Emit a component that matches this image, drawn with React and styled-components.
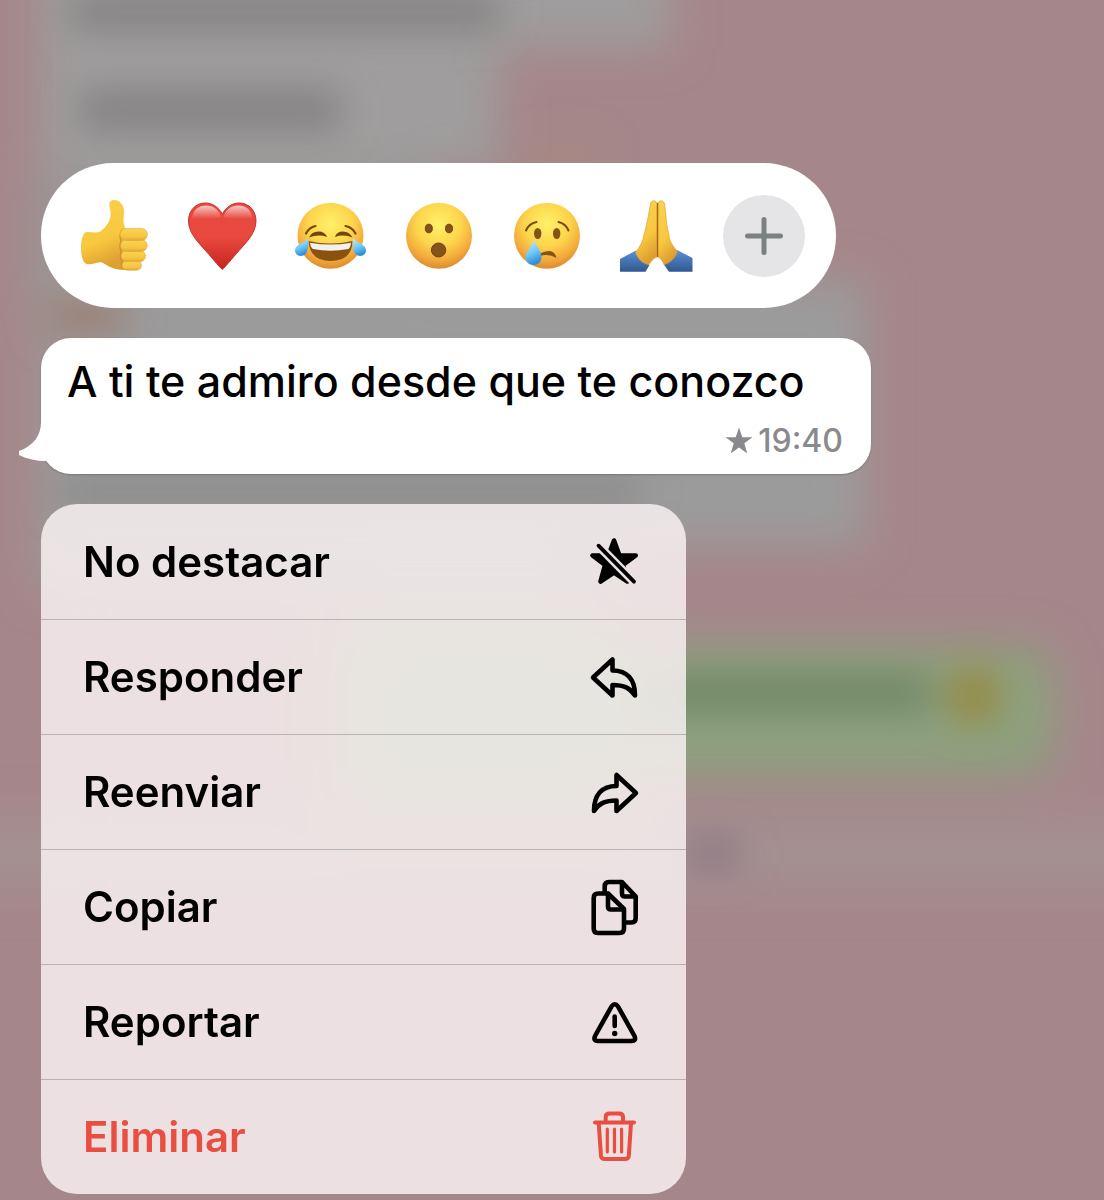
import React from "react";
import styled, { createGlobalStyle } from "styled-components";

const GlobalStyle = createGlobalStyle`
  * {
    box-sizing: border-box;
  }

  body {
    margin: 0;
    background: #a5868a;
    font-family: Inter, "Liberation Sans", sans-serif;
    color: #000;
  }

  button {
    font: inherit;
    color: inherit;
    border: 0;
    padding: 0;
    cursor: pointer;
  }
`;

const Page = styled.main`
  position: relative;
  isolation: isolate;
  min-height: 100vh;
  overflow: hidden;
  padding: 163px 40px 6px 41px;
  display: flex;
  flex-direction: column;
  align-items: flex-start;
  gap: 30px;
`;

const Backdrop = styled.svg`
  position: absolute;
  inset: 0;
  width: 100%;
  height: 100%;
  z-index: -1;
`;

const Defs = styled.svg`
  position: absolute;
`;

const Reactions = styled.div`
  width: 100%;
  max-width: 795px;
  height: 145px;
  padding: 0 31px 0 32px;
  display: flex;
  align-items: center;
  justify-content: space-between;
  border-radius: 72px;
  background: #fff;
`;

const ReactionButton = styled.button`
  width: 82px;
  height: 82px;
  border-radius: 50%;
  background: ${(props) => (props.$filled ? "#e5e5e8" : "transparent")};

  svg {
    display: block;
    width: 100%;
    height: 100%;
  }
`;

const Bubble = styled.article`
  position: relative;
  width: 100%;
  max-width: 830px;
  padding: 15px 28px 17px 26px;
  border-radius: 30px;
  background: #fff;
  box-shadow: 0 1px 2px rgba(0, 0, 0, 0.2);

  p {
    margin: 0;
    font-size: 43px;
    font-weight: 550;
    line-height: 56px;
  }
`;

const Tail = styled.svg`
  position: absolute;
  left: -22px;
  bottom: 4px;
  width: 44px;
  height: 48px;
`;

const Meta = styled.div`
  display: flex;
  align-items: center;
  justify-content: flex-end;
  gap: 5px;
  height: 48px;
  padding-top: 16px;
  color: #8a8a8e;
  font-size: 32px;
  font-weight: 550;
  line-height: 34px;

  svg {
    width: 28px;
    height: 28px;
  }
`;

const Menu = styled.ul`
  width: 100%;
  max-width: 645px;
  margin: 0;
  padding: 0;
  list-style: none;
  overflow: hidden;
  border-radius: 36px;
  background: rgba(254, 246, 248, 0.8);
  backdrop-filter: blur(30px);
`;

const MenuRow = styled.li`
  height: 115px;

  & + & {
    border-top: 1px solid #b9b2b3;
  }
`;

const MenuButton = styled.button`
  width: 100%;
  height: 100%;
  padding: 0 42px;
  display: flex;
  align-items: center;
  justify-content: space-between;
  background: transparent;
  color: ${(props) => (props.$danger ? "#e94f40" : "#000")};
  font-size: 42px;
  font-weight: 600;
  line-height: 56px;

  svg {
    width: 60px;
    height: 60px;
    fill: none;
    stroke: currentColor;
    stroke-width: 4.6;
    stroke-linecap: round;
    stroke-linejoin: round;
  }
`;

// blurred conversation that stays behind the focused message
function Conversation() {
  return (
    <Backdrop viewBox="0 0 1104 1200" preserveAspectRatio="xMinYMin slice" aria-hidden="true">
      <defs>
        <filter id="soft" x="-50%" y="-50%" width="200%" height="200%">
          <feGaussianBlur stdDeviation="22" />
        </filter>
        <filter id="softText" x="-50%" y="-200%" width="200%" height="500%">
          <feGaussianBlur stdDeviation="18" />
        </filter>
      </defs>
      <rect width="1104" height="1200" fill="#a5868a" />
      <g filter="url(#soft)">
        <rect x="40" y="-80" width="630" height="128" fill="#9f9d9d" />
        <rect x="40" y="-80" width="460" height="250" fill="#9f9d9d" />
        <rect x="30" y="170" width="400" height="150" fill="#9b9494" />
        <rect x="40" y="280" width="825" height="266" fill="#9b9b9b" />
        <rect x="40" y="530" width="560" height="60" fill="#9b9b9b" />
        <rect x="-60" y="815" width="1240" height="75" fill="#a49092" />
        <rect x="330" y="610" width="290" height="210" rx="30" fill="#8da17f" />
        <rect x="400" y="646" width="655" height="130" rx="30" fill="#8da17f" />
      </g>
      <g filter="url(#softText)">
        <rect x="70" y="-6" width="430" height="36" fill="#838181" />
        <rect x="80" y="90" width="260" height="40" fill="#838181" />
        <rect x="530" y="145" width="70" height="22" fill="#a8897d" />
        <rect x="45" y="300" width="80" height="34" fill="#9b7e72" />
        <rect x="60" y="478" width="580" height="28" fill="#888" />
        <rect x="640" y="674" width="290" height="38" fill="#708666" />
        <circle cx="974" cy="696" r="29" fill="#968a44" />
        <rect x="686" y="838" width="54" height="30" fill="#8a7681" />
      </g>
    </Backdrop>
  );
}

function EmojiDefs() {
  return (
    <Defs width="0" height="0" aria-hidden="true">
      <defs>
        <radialGradient id="face" cx="50%" cy="32%" r="68%">
          <stop offset="0" stopColor="#fff16a" />
          <stop offset="0.5" stopColor="#fcd54b" />
          <stop offset="0.8" stopColor="#f3ab3c" />
          <stop offset="1" stopColor="#dd8a30" />
        </radialGradient>
        <linearGradient id="skin" x1="0" y1="0" x2="0.3" y2="1">
          <stop offset="0" stopColor="#fbd24c" />
          <stop offset="0.65" stopColor="#f7c83f" />
          <stop offset="1" stopColor="#dfa032" />
        </linearGradient>
        <linearGradient id="finger" x1="0" y1="0" x2="0" y2="1">
          <stop offset="0" stopColor="#fbd450" />
          <stop offset="0.7" stopColor="#f5c540" />
          <stop offset="1" stopColor="#e2a637" />
        </linearGradient>
        <linearGradient id="heart" x1="0" y1="0" x2="0" y2="1">
          <stop offset="0" stopColor="#e5483f" />
          <stop offset="0.5" stopColor="#ea4a3e" />
          <stop offset="1" stopColor="#c4241f" />
        </linearGradient>
        <linearGradient id="shine" x1="0" y1="0" x2="0" y2="1">
          <stop offset="0" stopColor="#fff" stopOpacity="0.7" />
          <stop offset="1" stopColor="#fff" stopOpacity="0" />
        </linearGradient>
        <linearGradient id="tear" x1="0" y1="0" x2="0.3" y2="1">
          <stop offset="0" stopColor="#c9eefd" />
          <stop offset="0.6" stopColor="#6cc6f5" />
          <stop offset="1" stopColor="#2f90d8" />
        </linearGradient>
        <linearGradient id="sleeve" x1="0" y1="0" x2="0" y2="1">
          <stop offset="0" stopColor="#5b90d6" />
          <stop offset="1" stopColor="#31588f" />
        </linearGradient>
      </defs>
    </Defs>
  );
}

function ThumbUp() {
  return (
    <svg viewBox="0 0 82 82">
      <path
        fill="url(#skin)"
        d="M36.3 9C36.3 6 39 4.7 42 5C47.5 5.6 51 11 51 16.500C51 22 49.500 26 52 33L56 38V70L52 75C45 75 40 73.500 36 71.500C32 69.500 30 67 27 67.200C22 67.600 18 70 13.700 69C9.500 67.500 8 60 8 53.300C8 46 9.500 39 12.500 37.300C17 36.500 23 38.500 27 36.700C32 33 36.500 28 37.500 21C38 16.500 36.300 13 36.300 9Z"
      />
      <path d="M49 35Q46 40 48 46Q46 51 48 57Q46.500 62 49 67Q47.500 71 50 74" fill="none" stroke="#cf922f" strokeWidth="1.500" />
      <g fill="url(#finger)" stroke="#dba037" strokeWidth="0.5">
        <rect x="49" y="65.500" width="19.500" height="9.700" rx="4.800" />
        <rect x="48" y="55.500" width="24.500" height="11" rx="5.500" />
        <rect x="47.500" y="44.500" width="26.700" height="12" rx="6" />
        <rect x="47" y="33.500" width="27.500" height="12" rx="6" />
      </g>
    </svg>
  );
}

function Heart() {
  return (
    <svg viewBox="0 0 82 82">
      <path
        fill="url(#heart)"
        stroke="#c8312a"
        strokeWidth="1"
        strokeLinejoin="round"
        d="M41.300 19C37 11.500 31 8 24.500 8C14 8 7.500 16 7.500 26C7.500 39 19 49 28 59.500C34 66.500 38 71.500 41.300 74.500C44.600 71.500 48.600 66.500 54.600 59.500C63.600 49 75 39 75 26C75 16 68.500 8 58 8C51.500 8 45.600 11.500 41.300 19Z"
      />
      <path fill="url(#shine)" d="M11 24C12 14 18 10.500 25 10.500C33 10.500 38 15 40 22C31 26 21 22 11 24Z" />
      <path fill="url(#shine)" d="M71.500 24C70.500 14 64.500 10.500 57.500 10.500C49.500 10.500 44.500 15 42.500 22C51.500 26 61.500 22 71.500 24Z" />
    </svg>
  );
}

function Laugh() {
  return (
    <svg viewBox="0 0 82 82">
      <circle cx="40.500" cy="40.700" r="33" fill="url(#face)" />
      <path
        fill="none"
        stroke="#7a4a0c"
        strokeLinecap="round"
        strokeWidth="2.200"
        d="M16 38.500Q19 32.500 25.500 31M65.500 38.500Q62.500 32.500 55.500 31"
      />
      <path fill="#75460b" d="M19 42.500Q21.500 36.500 28.500 36.500Q35 36.500 37 42Q28 39 19 42.500ZM62.500 42.500Q59.500 36.500 53 36.500Q46.500 36.500 45 42Q53.500 39 62.500 42.500Z" />
      <path fill="#89530e" d="M18.500 46Q40.500 51 62.500 46Q62 66 40.500 66Q20 66 18.500 46Z" />
      <path fill="#f3f1ee" d="M20 47.700Q40.500 51.500 61 47.700Q60.500 52.500 58.500 54Q40.500 57.500 23 54Q20.500 52.500 20 47.700Z" />
      <path fill="url(#tear)" d="M18 43C18.500 50 18.500 55 15.500 59C12 62.500 5 61 5 55.500C5 49 13.500 49 18 43Z" />
      <path fill="url(#tear)" d="M63 43C62.500 50 62.500 55 65.500 59C69 62.500 76 61 76 55.500C76 49 67.500 49 63 43Z" />
    </svg>
  );
}

function Surprised() {
  return (
    <svg viewBox="0 0 82 82">
      <circle cx="41" cy="40.700" r="33" fill="url(#face)" />
      <g fill="#85531a" stroke="#6f430f">
        <ellipse cx="30.800" cy="33.500" rx="3.500" ry="4.300" />
        <ellipse cx="51" cy="33.500" rx="3.500" ry="4.300" />
        <ellipse cx="40.600" cy="55" rx="7.200" ry="7" />
      </g>
    </svg>
  );
}

function Crying() {
  return (
    <svg viewBox="0 0 82 82">
      <circle cx="41" cy="40.700" r="33" fill="url(#face)" />
      <g fill="#85531a">
        <ellipse cx="31.700" cy="38.500" rx="3.700" ry="5.600" />
        <ellipse cx="50.700" cy="38.500" rx="3.700" ry="5.600" />
        <path d="M33 59Q39 56 43.500 56Q49 56.500 50.500 63Q43 58.500 34 61Z" />
      </g>
      <path
        fill="none"
        stroke="#7a4a10"
        strokeWidth="2"
        strokeLinecap="round"
        d="M20 35.500Q23 28.500 30.500 27M62.500 35.500Q59.500 28.500 52.500 27"
      />
      <path fill="url(#tear)" d="M28 45C31 52 35.500 57 35.500 62C35.500 67 32 70 27.500 70C23 70 19.500 67 19.500 62C19.500 57 25.500 52 28 45Z" />
    </svg>
  );
}

function Pray() {
  return (
    <svg viewBox="0 0 82 82">
      <path fill="url(#sleeve)" d="M5 64L21 55.500L34.500 70L30.500 76.700H5Z" />
      <path fill="url(#sleeve)" d="M77.500 63L62 55L48.500 69L54 76.700H77.500Z" />
      <path
        fill="url(#skin)"
        stroke="#dda036"
        strokeWidth="0.7"
        d="M35.500 9C36 5.500 40.500 4.500 42 8V62C39 63 36 66 34 69.500C28 69 23 64 20.500 57.500C25 52 28 46 29 40C31 33 32 27 33.200 21.700Z"
      />
      <path
        fill="url(#skin)"
        stroke="#dda036"
        strokeWidth="0.7"
        d="M49.500 9C49 5.500 44.500 4.500 43 8V62C45 63 47 65 49 69.500C55 68 60 63 62.500 56.500C58 51 54 46 54 40C52 33 51.500 27 51 21.700Z"
      />
      <path d="M42.500 8V62" stroke="#a8651e" strokeWidth="1.300" />
    </svg>
  );
}

function Plus() {
  return (
    <svg viewBox="0 0 82 82">
      <path d="M41 24.500V57.500M24.500 41H57.500" stroke="#7a8180" strokeWidth="5" strokeLinecap="round" />
    </svg>
  );
}

function MenuIcon({ children }) {
  return (
    <svg viewBox="-2 -2 60 60" aria-hidden="true">
      {children}
    </svg>
  );
}

const replyPath = "M7 28.500L26.500 10.500V21.500C41 21.500 49 30 49 46.500C44 39 38 36 26.500 36V46.500Z";

const reactions = [
  { label: "Me gusta", Icon: ThumbUp },
  { label: "Me encanta", Icon: Heart },
  { label: "Me divierte", Icon: Laugh },
  { label: "Me asombra", Icon: Surprised },
  { label: "Me entristece", Icon: Crying },
  { label: "Gracias", Icon: Pray },
];

const actions = [
  {
    label: "No destacar",
    icon: (
      <>
        <mask id="starCut" maskUnits="userSpaceOnUse" x="-2" y="-2" width="60" height="60">
          <rect x="-2" y="-2" width="60" height="60" fill="#fff" stroke="none" />
          <path d="M2 1L58 58" stroke="#000" strokeWidth="8.800" />
        </mask>
        <path
          mask="url(#starCut)"
          fill="currentColor"
          d="M28 6.500L33.500 21.500H49.700L37 31L41.500 47.500L28 38.500L14.500 47.500L19 31L6.500 21.500H22.500Z"
        />
        <path d="M12.500 11.700L48 47.700" strokeWidth="3.800" />
      </>
    ),
  },
  { label: "Responder", icon: <path d={replyPath} /> },
  { label: "Reenviar", icon: <path d={replyPath} transform="matrix(-1 0 0 1 57 0.500)" /> },
  {
    label: "Copiar",
    icon: (
      <>
        <path d="M22 14.500H12Q7.700 14.500 7.700 19V49.500Q7.700 54 12 54H33.500Q38 54 38 49.500V30L22 14.500V27.500Q22 30.500 25 30.500H38" />
        <path d="M18.700 13.500V7.500Q18.700 3 23 3H36L49.700 17.500V39Q49.700 43.500 45.500 43.500H39M36 3V14.500Q36 17.500 39 17.500H49.700" />
      </>
    ),
  },
  {
    label: "Reportar",
    icon: (
      <>
        <path d="M25.500 12.500Q28.700 8 32 12.500L48.500 42Q50.500 47 45.500 47H12Q7 47 9 42Z" />
        <path d="M28.700 22.500V32" />
        <circle cx="28.700" cy="39.500" r="2.700" fill="currentColor" stroke="none" />
      </>
    ),
  },
  {
    label: "Eliminar",
    danger: true,
    icon: (
      <>
        <path strokeWidth="4" d="M9 13.500H48M19.700 13V8Q19.700 4.500 23.500 4.500H33Q37 4.500 37 8V13" />
        <path strokeWidth="4" d="M12.700 14L15 47Q15.300 50 19 50H39Q42.500 50 42.800 47L45 14" />
        <path strokeWidth="3.200" d="M21.300 20V43M28.500 20V43M35.600 20V43" />
      </>
    ),
  },
];

export default function App() {
  return (
    <Page>
      <GlobalStyle />
      <Conversation />
      <EmojiDefs />
      <Reactions>
        {reactions.map(({ label, Icon }) => (
          <ReactionButton key={label} type="button" aria-label={label}>
            <Icon />
          </ReactionButton>
        ))}
        <ReactionButton type="button" aria-label="Más reacciones" $filled>
          <Plus />
        </ReactionButton>
      </Reactions>

      <Bubble>
        <Tail viewBox="0 0 44 48" aria-hidden="true">
          <path fill="#fff" d="M22 0C22 14 14 24 0 29V33C8 37 18 39 26 39L44 30V0Z" />
        </Tail>
        <p>A ti te admiro desde que te conozco</p>
        <Meta>
          <svg viewBox="0 0 28 28" aria-hidden="true">
            <path fill="currentColor" d="M14 0.500L17.300 10.300H27.500L19.300 16.300L22.300 26.500L14 20.500L5.700 26.500L8.700 16.300L0.500 10.300H10.700Z" />
          </svg>
          <time>19:40</time>
        </Meta>
      </Bubble>

      <Menu>
        {actions.map((action) => (
          <MenuRow key={action.label}>
            <MenuButton type="button" $danger={action.danger}>
              <span>{action.label}</span>
              <MenuIcon>{action.icon}</MenuIcon>
            </MenuButton>
          </MenuRow>
        ))}
      </Menu>
    </Page>
  );
}
